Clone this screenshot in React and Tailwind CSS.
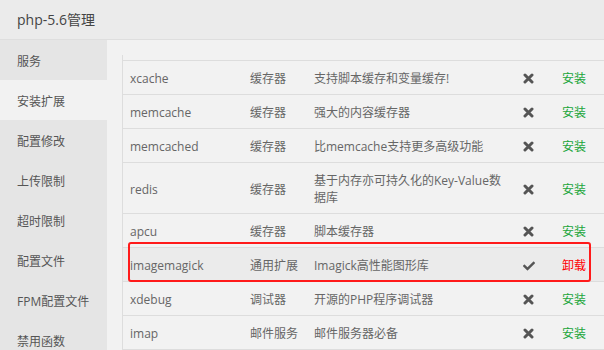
import React from 'react';
import { FaCheck } from 'react-icons/fa';

const menu = ['服务', '安装扩展', '配置修改', '上传限制', '超时限制', '配置文件', 'FPM配置文件', '禁用函数'];

const extensions = [
    { name: 'xcache', type: '缓存器', desc: '支持脚本缓存和变量缓存!', installed: false },
    { name: 'memcache', type: '缓存器', desc: '强大的内容缓存器', installed: false },
    { name: 'memcached', type: '缓存器', desc: '比memcache支持更多高级功能', installed: false },
    { name: 'redis', type: '缓存器', desc: '基于内存亦可持久化的Key-Value数据库', installed: false },
    { name: 'apcu', type: '缓存器', desc: '脚本缓存器', installed: false },
    { name: 'imagemagick', type: '通用扩展', desc: 'Imagick高性能图形库', installed: true, marked: true },
    { name: 'xdebug', type: '调试器', desc: '开源的PHP程序调试器', installed: false },
    { name: 'imap', type: '邮件服务', desc: '邮件服务器必备', installed: false },
];

// chunky "times" glyph like font-awesome 4
const CrossIcon = () => (
    <svg width="11" height="11" viewBox="0 0 11 11" className="block">
        <path d="M2 2 L9 9 M9 2 L2 9" stroke="currentColor" strokeWidth="3" strokeLinecap="round" fill="none" />
    </svg>
);

const App = () => {
    return (
        <div
            className="h-[350px] w-[604px] overflow-hidden bg-[#f2f2f2] text-[#666]"
            style={{ fontFamily: '"Open Sans", "Noto Sans CJK SC", sans-serif' }}
        >
            {/* Title */}
            <div className="h-[40px] bg-[#ebebeb] border-b border-[#dedede] pl-[17px] flex items-center text-[14px] text-[#444]">
                php-5.6管理
            </div>

            <div className="flex">
                {/* Side menu */}
                <div className="w-[107px] shrink-0 bg-[#e5e5e5] h-[310px]">
                    {menu.map((item, i) => (
                        <div
                            key={item}
                            className={`h-[40px] flex items-center pl-[17px] pt-[4px] text-[12px] text-[#555] ${i === 1 ? 'bg-[#f2f2f2]' : ''}`}
                        >
                            {item}
                        </div>
                    ))}
                </div>

                {/* Extension table */}
                <div className="pl-[15px] pt-[15px]">
                    <div className="w-[482px] border-l border-[#dddddd] text-[12px]">
                        <div className="h-[6px] border-b border-[#dddddd]" />
                        {extensions.map((ext) => (
                            <div
                                key={ext.name}
                                className={`relative grid grid-cols-[119px_64px_209px_39px_51px] items-center border-b border-[#dddddd] pt-[9px] pb-[7px] leading-[17px] ${ext.marked ? 'bg-[#ebebeb]' : ''}`}
                            >
                                <div className="pl-[7px]">{ext.name}</div>
                                <div className="pl-[8px]">{ext.type}</div>
                                <div className="pl-[8px] pr-[8px]">{ext.desc}</div>
                                <div className="pl-[8px] text-[#555]">
                                    {ext.installed ? <FaCheck size={12} /> : <CrossIcon />}
                                </div>
                                <div className={`pl-[8px] ${ext.installed ? 'text-[#ff0000]' : 'text-[#20a53a]'}`}>
                                    {ext.installed ? '卸载' : '安装'}
                                </div>
                                {ext.marked && (
                                    <div className="absolute left-[5px] right-[13px] top-[-6px] bottom-[-1px] border-2 border-[#ff1a1a] rounded-[3px] pointer-events-none" />
                                )}
                            </div>
                        ))}
                    </div>
                </div>
            </div>
        </div>
    );
};

export default App;
